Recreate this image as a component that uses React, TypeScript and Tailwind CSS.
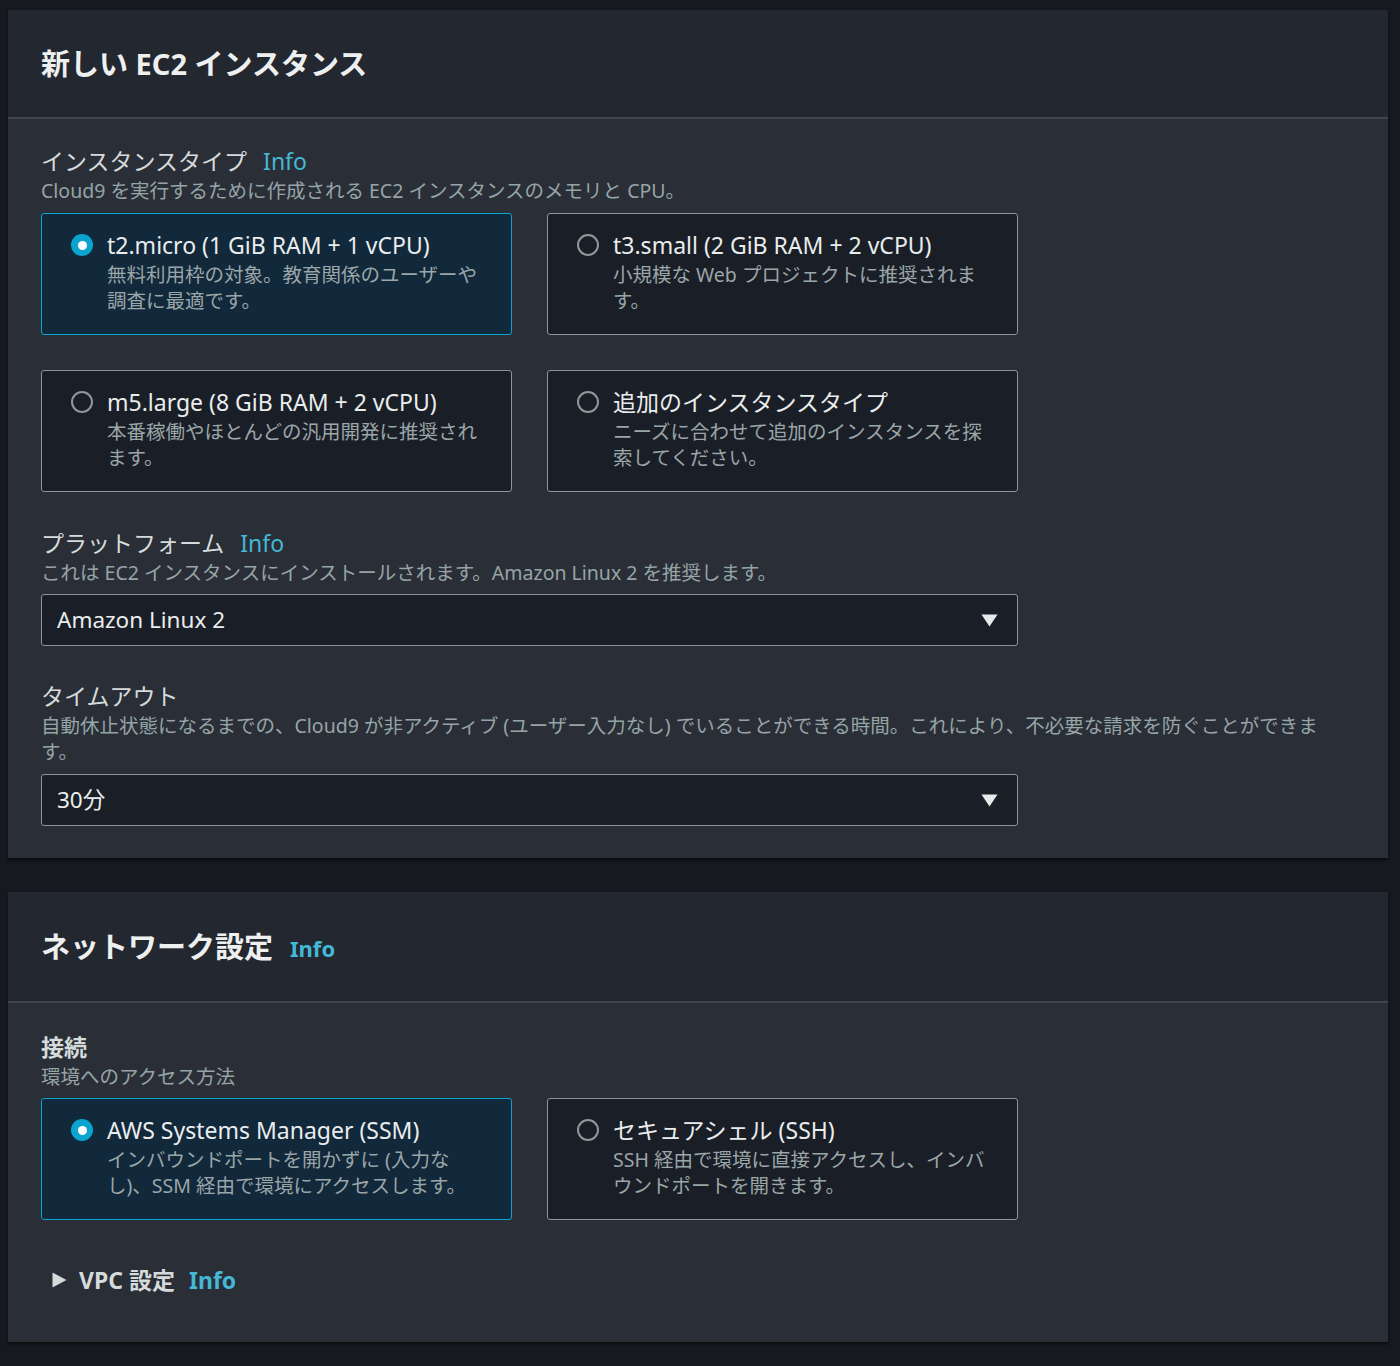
// App.tsx
import React from 'react';

const FONT = 'font-["Noto_Sans","Noto_Sans_CJK_JP",sans-serif]';

interface RadioCardProps {
  title: string;
  desc: string;
  selected?: boolean;
}

const RadioCard: React.FC<RadioCardProps> = ({ title, desc, selected }) => (
  <div
    className={`h-[122px] rounded-[3px] border pl-[29px] pr-[24px] pt-[16px] flex gap-[14px] ${
      selected ? 'bg-[#12283b] border-[#0aa4cf]' : 'bg-[#1a1f27] border-[#8a9798]'
    }`}
  >
    <div className="pt-[4px] shrink-0">
      {selected ? (
        <div className="w-[22px] h-[22px] rounded-full bg-[#0aa4cf] flex items-center justify-center">
          <div className="w-[9px] h-[9px] rounded-full bg-white" />
        </div>
      ) : (
        <div className="w-[22px] h-[22px] rounded-full border-2 border-[#8d9999]" />
      )}
    </div>
    <div className="min-w-0">
      <div className="text-[23px] leading-[30px] text-[#eaeded]">{title}</div>
      <div className="mt-[2px] text-[19.5px] leading-[26px] text-[#9aa6a8]">{desc}</div>
    </div>
  </div>
);

const FieldLabel: React.FC<{ text: string; info?: boolean; bold?: boolean }> = ({ text, info, bold }) => (
  <div className={`text-[23px] leading-[34px] text-[#d5dbdb] flex ${bold ? 'font-bold' : ''}`}>
    <span>{text}</span>
    {info && <span className="ml-4 text-[#44b9d6] font-normal">Info</span>}
  </div>
);

const Desc: React.FC<{ children: React.ReactNode }> = ({ children }) => (
  <div className="text-[19.5px] leading-[26px] text-[#95a5a6]">{children}</div>
);

const SelectBox: React.FC<{ value: string }> = ({ value }) => (
  <div className="w-[977px] h-[52px] rounded-[3px] border border-[#8a9798] bg-[#1a1f27] flex items-center justify-between pl-[15px] pr-[19px]">
    <span className="text-[22.5px] text-[#eaeded]">{value}</span>
    <svg width="17" height="13" viewBox="0 0 17 13">
      <path d="M0.5 0.5 H16.5 L8.5 12.5 Z" fill="#e6eaea" />
    </svg>
  </div>
);

const PanelHeader: React.FC<{ h: string; children: React.ReactNode }> = ({ h, children }) => (
  <div className={`${h} bg-[#232730] border-b-2 border-[#3f4550] px-[33px] flex items-center`}>{children}</div>
);

export default function App() {
  return (
    <div className={`min-h-[1366px] bg-[#16191f] pt-[10px] ${FONT}`}>
      {/* EC2 panel */}
      <div className="ml-[8px] w-[1380px] bg-[#2a2e37] shadow-[0_2px_3px_rgba(0,0,0,0.6)]">
        <PanelHeader h="h-[109px]">
          <h1 className="text-[29px] font-bold text-[#eef0f0]">新しい EC2 インスタンス</h1>
        </PanelHeader>
        <div className="px-[33px] pt-[25px] pb-[32px]">
          <FieldLabel text="インスタンスタイプ" info />
          <Desc>Cloud9 を実行するために作成される EC2 インスタンスのメモリと CPU。</Desc>
          <div className="mt-[9px] w-[977px] grid grid-cols-2 gap-x-[35px] gap-y-[35px]">
            <RadioCard selected title="t2.micro (1 GiB RAM + 1 vCPU)" desc="無料利用枠の対象。教育関係のユーザーや調査に最適です。" />
            <RadioCard title="t3.small (2 GiB RAM + 2 vCPU)" desc="小規模な Web プロジェクトに推奨されます。" />
            <RadioCard title="m5.large (8 GiB RAM + 2 vCPU)" desc="本番稼働やほとんどの汎用開発に推奨されます。" />
            <RadioCard title="追加のインスタンスタイプ" desc="ニーズに合わせて追加のインスタンスを探索してください。" />
          </div>

          <div className="mt-[34px]">
            <FieldLabel text="プラットフォーム" info />
            <Desc>これは EC2 インスタンスにインストールされます。Amazon Linux 2 を推奨します。</Desc>
          </div>
          <div className="mt-[8px]">
            <SelectBox value="Amazon Linux 2" />
          </div>

          <div className="mt-[33px]">
            <FieldLabel text="タイムアウト" />
            <div className="pr-[10px]">
              <Desc>
                自動休止状態になるまでの、Cloud9 が非アクティブ (ユーザー入力なし) でいることができる時間。これにより、不必要な請求を防ぐことができます。
              </Desc>
            </div>
          </div>
          <div className="mt-[9px]">
            <SelectBox value="30分" />
          </div>
        </div>
      </div>

      {/* Network panel */}
      <div className="mt-[34px] ml-[8px] w-[1380px] bg-[#2a2e37] shadow-[0_2px_3px_rgba(0,0,0,0.6)]">
        <PanelHeader h="h-[111px]">
          <h2 className="text-[29px] font-bold text-[#eef0f0]">ネットワーク設定</h2>
          <span className="ml-[17px] mt-[4px] text-[22px] font-bold text-[#44b9d6]">Info</span>
        </PanelHeader>
        <div className="px-[33px] pt-[27px] pb-[47px]">
          <FieldLabel text="接続" bold />
          <Desc>環境へのアクセス方法</Desc>
          <div className="mt-[8px] w-[977px] grid grid-cols-2 gap-x-[35px]">
            <RadioCard
              selected
              title="AWS Systems Manager (SSM)"
              desc="インバウンドポートを開かずに (入力なし)、SSM 経由で環境にアクセスします。"
            />
            <RadioCard title="セキュアシェル (SSH)" desc="SSH 経由で環境に直接アクセスし、インバウンドポートを開きます。" />
          </div>

          <div className="mt-[45px] pl-[11px] flex items-center h-[30px]">
            <svg width="15" height="16" viewBox="0 0 15 16">
              <path d="M0.5 0.5 L14.5 8 L0.5 15.5 Z" fill="#d5dbdb" />
            </svg>
            <span className="ml-[12px] text-[23px] font-bold text-[#d5dbdb]">VPC 設定</span>
            <span className="ml-[14px] text-[23px] font-bold text-[#44b9d6]">Info</span>
          </div>
        </div>
      </div>
    </div>
  );
}
